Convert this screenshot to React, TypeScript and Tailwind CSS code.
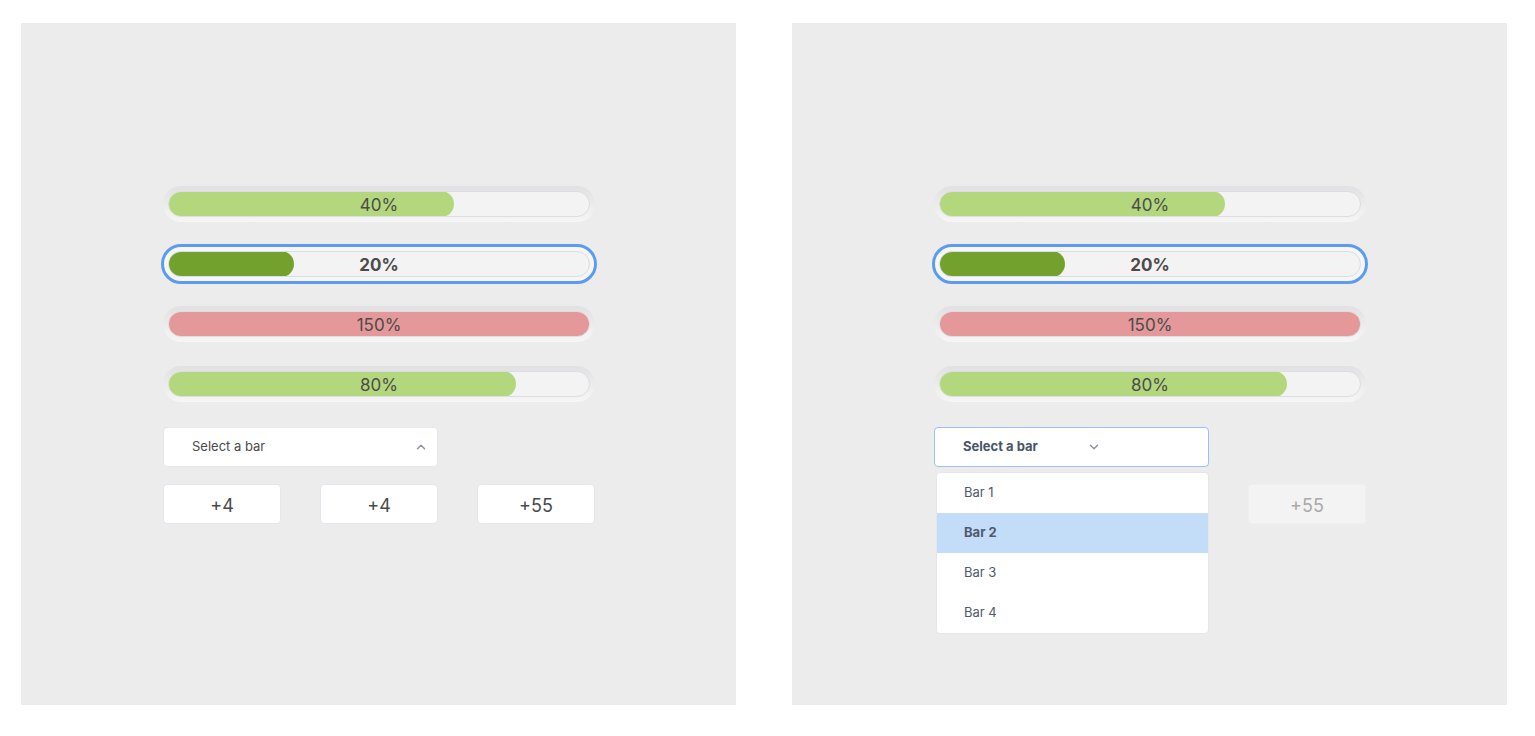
import { ChevronDown, ChevronUp } from "lucide-react";

type Bar = { label: string; fill: number; color: string };

const bars: Bar[] = [
  { label: "40%", fill: 286, color: "bg-[#b3d77c]" },
  { label: "20%", fill: 126, color: "bg-[#72a22d]" },
  { label: "150%", fill: 422, color: "bg-[#e49899]" },
  { label: "80%", fill: 348, color: "bg-[#b3d77c]" },
];

function ProgressBar({ bar, selected }: { bar: Bar; selected: boolean }) {
  return (
    <div
      className={
        selected
          ? "h-9 rounded-full p-[5px] bg-[#f6f6f6] outline-3 outline-[#5b9cf2] -outline-offset-1"
          : "h-9 rounded-full p-[5px] bg-gradient-to-b from-[#e1e1e3] to-[#f6f6f6]"
      }
    >
      <div className="relative h-[26px] rounded-full bg-[#f3f3f3] border border-[#dcdde0] overflow-hidden">
        <div
          className={`absolute -left-px -top-px -bottom-px rounded-full ${bar.color}`}
          style={{ width: bar.fill }}
        />
        <div
          className={`relative h-full pt-[3px] flex items-center justify-center text-[17px] text-[#4b4b4b] ${
            selected ? "font-bold" : ""
          }`}
        >
          {bar.label}
        </div>
      </div>
    </div>
  );
}

function Panel({ open }: { open: boolean }) {
  const btn = open
    ? "w-[118px] h-10 pt-[3px] rounded-[4px] bg-[#f3f3f3] border border-[#efefef] text-[18px] text-[#a9a9a9]"
    : "w-[118px] h-10 pt-[3px] rounded-[4px] bg-white border border-[#e3e6ec] text-[18px] text-[#4a4a4a]";

  return (
    <div className="w-[715px] h-[682px] shrink-0 bg-[#ececec] pl-[142px] pt-[163px]">
      <div className="w-[432px]">
        <div className="flex flex-col gap-6">
          {bars.map((b, i) => (
            <ProgressBar key={b.label} bar={b} selected={i === 1} />
          ))}
        </div>

        <div className="relative mt-[25px] w-[275px]">
          {open ? (
            <div className="h-10 bg-white border border-[#9dbff6] rounded-[4px] pl-[28px] flex items-center text-[13px] font-bold text-[#4a5568]">
              <span className="w-[124px]">Select a bar</span>
              <ChevronDown className="w-3.5 h-3.5 text-[#8b95a7]" strokeWidth={2.5} />
            </div>
          ) : (
            <div className="h-10 bg-white border border-[#e3e6ec] rounded-[4px] pl-[28px] pr-[9px] flex items-center justify-between text-[13px] text-[#4a4a4a]">
              <span>Select a bar</span>
              <ChevronUp className="w-3.5 h-3.5 text-[#8b95a7]" strokeWidth={2.5} />
            </div>
          )}

          {open && (
            <div className="absolute z-10 left-[2px] top-[45px] w-[273px] bg-white border border-[#e3e6ec] rounded-[4px] overflow-hidden">
              {["Bar 1", "Bar 2", "Bar 3", "Bar 4"].map((label, i) => (
                <div
                  key={label}
                  className={`h-10 pl-[27px] flex items-center text-[13px] text-[#4f5a6e] ${
                    i === 1 ? "bg-[#c3ddf8] font-bold text-[#4a5568]" : ""
                  }`}
                >
                  {label}
                </div>
              ))}
            </div>
          )}
        </div>

        <div className="mt-[17px] flex justify-between">
          <button className={open ? `${btn} invisible` : btn}>+4</button>
          <button className={open ? `${btn} invisible` : btn}>+4</button>
          <button className={btn}>+55</button>
        </div>
      </div>
    </div>
  );
}

export default function App() {
  return (
    <div
      className="min-h-screen bg-white flex gap-[56px] pl-[21px] pt-[23px]"
      style={{ fontFamily: "Inter, 'Noto Sans', sans-serif" }}
    >
      <Panel open={false} />
      <Panel open={true} />
    </div>
  );
}
